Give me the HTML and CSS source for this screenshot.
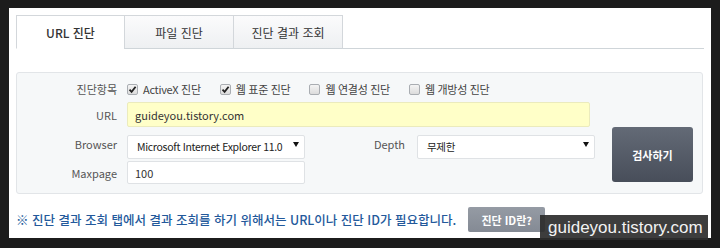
FILE: index.html
```html
<!DOCTYPE html>
<html lang="ko">
<head>
  <meta charset="UTF-8" />
  <meta name="viewport" content="width=device-width, initial-scale=1.0" />
  <title>웹 진단</title>
  <link rel="stylesheet" href="styles.css">
</head>
<body>

  <div class="frame">

    <!-- Tabs -->
    <div class="tabs">
      <a class="tab active">URL 진단</a>
      <a class="tab">파일 진단</a>
      <a class="tab">진단 결과 조회</a>
    </div>

    <!-- URL check form -->
    <form class="panel">
      <span class="label r1">진단항목</span>
      <div class="checks">
        <label class="check"><span class="box on"><svg viewBox="0 0 9 9"><path d="M1.5 4.6 L3.6 6.8 L7.6 1.8" /></svg></span>ActiveX 진단</label>
        <label class="check"><span class="box on"><svg viewBox="0 0 9 9"><path d="M1.5 4.6 L3.6 6.8 L7.6 1.8" /></svg></span>웹 표준 진단</label>
        <label class="check"><span class="box"></span>웹 연결성 진단</label>
        <label class="check"><span class="box"></span>웹 개방성 진단</label>
      </div>

      <span class="label r2">URL</span>
      <input class="field url" type="text" value="guideyou.tistory.com" />

      <span class="label r3">Browser</span>
      <div class="select browser">
        <select>
          <option>Microsoft Internet Explorer 11.0</option>
        </select>
      </div>
      <span class="label depth">Depth</span>
      <div class="select depth-select">
        <select>
          <option>무제한</option>
        </select>
      </div>
      <button type="button" class="scan">검사하기</button>

      <span class="label r4">Maxpage</span>
      <input class="field maxpage" type="text" value="100" />
    </form>

    <!-- Note -->
    <div class="note">
      <p>※ 진단 결과 조회 탭에서 결과 조회를 하기 위해서는 URL이나 진단 ID가 필요합니다.</p>
      <button type="button" class="help">진단 ID란?</button>
    </div>

    <div class="watermark">guideyou.tistory.com</div>
  </div>

</body>
</html>
```

FILE: styles.css
```css
* {
  margin: 0;
  padding: 0;
  box-sizing: border-box;
  font-family: "Noto Sans CJK KR", "Noto Sans", sans-serif;
}

body {
  background: #1c1c1c;
  padding: 8px 9px 10px 9px;
}

.frame {
  position: relative;
  width: 702px;
  height: 230px;
  background: #fff;
  padding: 7px;
}

/* Tabs */
.tabs {
  display: flex;
  border-bottom: 1px solid #cfd5d9;
}

.tab {
  width: 110px;
  height: 34px;
  line-height: 33px;
  margin-left: -1px;
  margin-bottom: -1px;
  text-align: center;
  font-size: 12px;
  color: #333;
  border: 1px solid #d3d7db;
  border-bottom: 1px solid #cfd5d9;
  background: linear-gradient(#fbfbfc, #eef0f2);
}

.tab:first-child {
  width: 109px;
  margin-left: 0;
}

.tab.active {
  background: #fff;
  border-bottom-color: #fff;
  font-weight: 500;
}

/* Form panel */
.panel {
  margin-top: 23px;
  width: 687px;
  padding: 8px 9px 9px 0;
  background: #f6f8f9;
  border: 1px solid #e2e5e8;
  border-radius: 3px;
  display: grid;
  grid-template-columns: 100px 178px 92px 178px 88px;
  grid-template-rows: 16px 25px 24px 23px;
  column-gap: 10px;
  row-gap: 5px;
  align-items: center;
}

.label {
  grid-column: 1;
  text-align: right;
  font-size: 11px;
  color: #555;
}

.r1 { grid-row: 1; }
.r2 { grid-row: 2; }
.r3 { grid-row: 3; }
.r4 { grid-row: 4; }

.label.depth {
  grid-column: 3;
  grid-row: 3;
  padding-right: 2px;
}

.checks {
  grid-column: 2 / 6;
  grid-row: 1;
  display: flex;
  align-items: center;
}

.check {
  display: flex;
  align-items: center;
  font-size: 11px;
  color: #444;
  letter-spacing: -0.3px;
  margin-right: 19px;
}

.box {
  width: 11px;
  height: 11px;
  margin-right: 5px;
  border: 1px solid #a9adb2;
  border-radius: 2px;
  background: linear-gradient(#f4f4f4, #dcdcdc);
  display: flex;
  align-items: center;
  justify-content: center;
}

.box svg {
  width: 9px;
  height: 9px;
  fill: none;
  stroke: #222;
  stroke-width: 1.8;
}

.field {
  height: 100%;
  border: 1px solid #dfe2e5;
  border-radius: 2px;
  background: #fff;
  padding: 0 7px;
  font-size: 11px;
  color: #333;
}

.field.url {
  grid-column: 2 / 6;
  grid-row: 2;
  justify-self: start;
  width: 463px;
  background: #ffffc8;
  border-color: #ebebbd;
}

.field.maxpage {
  grid-column: 2;
  grid-row: 4;
}

.select {
  position: relative;
  height: 100%;
}

.select.browser {
  grid-column: 2;
  grid-row: 3;
}

.select.depth-select {
  grid-column: 4;
  grid-row: 3;
}

.select select {
  appearance: none;
  width: 100%;
  height: 100%;
  border: 1px solid #dfe2e5;
  border-radius: 2px;
  background: #fff;
  padding: 0 16px 0 9px;
  font-size: 10.5px;
  letter-spacing: -0.3px;
  color: #222;
}

.select::after {
  content: "";
  position: absolute;
  right: 6px;
  top: 10px;
  border-left: 3px solid transparent;
  border-right: 3px solid transparent;
  border-top: 5px solid #111;
}

.scan {
  grid-column: 5;
  grid-row: 3 / 5;
  justify-self: end;
  align-self: start;
  margin-top: -5px;
  width: 81px;
  height: 55px;
  border: none;
  border-radius: 3px;
  background: linear-gradient(#636a76, #484e5a);
  color: #fff;
  font-size: 11px;
  font-weight: 700;
}

/* Note */
.note {
  margin-top: 13px;
  display: flex;
  align-items: center;
}

.note p {
  font-size: 12.5px;
  font-weight: 500;
  color: #23599b;
  margin-right: 12px;
}

.help {
  width: 77px;
  height: 25px;
  border: none;
  border-radius: 2px;
  background: linear-gradient(#959ba4, #848a94);
  color: #fff;
  font-size: 11px;
  font-weight: 700;
}

.watermark {
  position: absolute;
  right: 3px;
  bottom: -2px;
  width: 168px;
  height: 25px;
  padding-left: 8px;
  background: rgba(45, 45, 45, 0.92);
  color: #f2f2f2;
  font-family: "Liberation Sans", sans-serif;
  font-size: 17px;
  line-height: 25px;
}
```
